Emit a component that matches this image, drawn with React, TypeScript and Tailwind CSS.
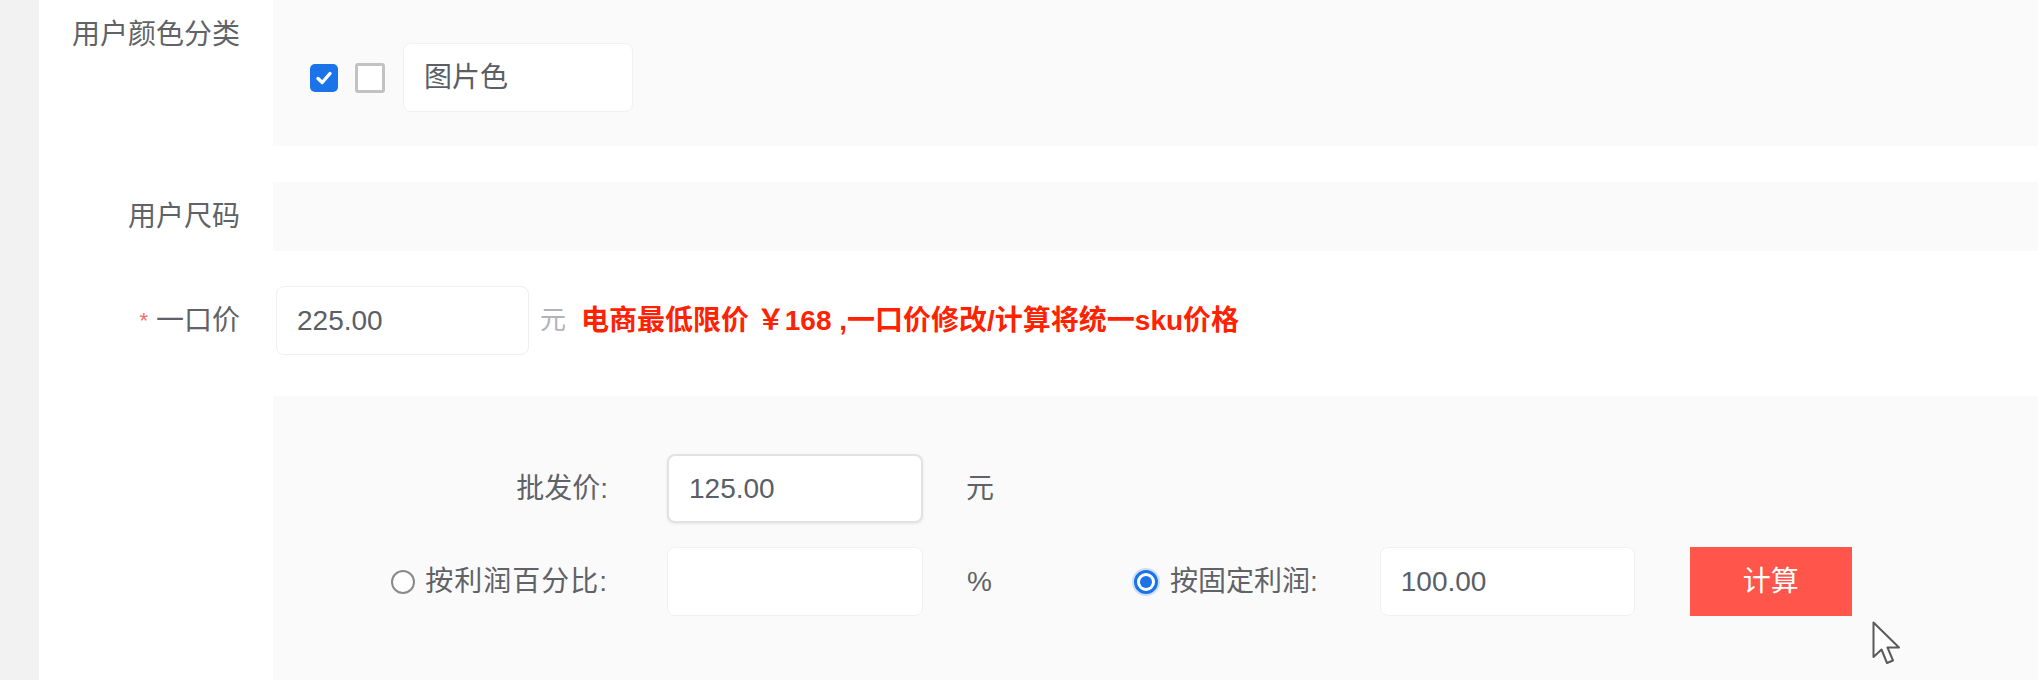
const font = '[font-family:"Liberation_Sans","Noto_Sans_CJK_SC",sans-serif]'

function Label({ children, className = '' }: { children: React.ReactNode; className?: string }) {
  return (
    <div className={`w-[234px] shrink-0 pr-[33px] text-right text-[28px] leading-[40px] text-[#5f6266] ${className}`}>
      {children}
    </div>
  )
}

function Field({ value, className = '' }: { value?: string; className?: string }) {
  return (
    <div
      className={`h-[69px] shrink-0 rounded-[8px] bg-white flex items-center pl-[20px] text-[28px] text-[#5a5e66] ${className}`}
    >
      {value}
    </div>
  )
}

function Radio({ checked }: { checked?: boolean }) {
  return checked ? (
    <span className="w-[24px] h-[24px] rounded-full border-[3px] border-[#1a73e8] bg-white flex items-center justify-center shadow-[0_0_0_2px_rgba(26,115,232,0.2)]">
      <span className="w-[12px] h-[12px] rounded-full bg-[#1a73e8]" />
    </span>
  ) : (
    <span className="w-[24px] h-[24px] rounded-full border-2 border-[#8a8a8a] bg-white" />
  )
}

export default function App() {
  return (
    <div className={`relative flex h-[680px] w-full overflow-hidden bg-white ${font}`}>
      <div className="w-[39px] shrink-0 bg-[#f2f2f2]" />

      <div className="flex-1 flex flex-col">
        {/* 用户颜色分类 */}
        <div className="flex h-[146px]">
          <Label className="pt-[15px]">用户颜色分类</Label>
          <div className="flex-1 bg-[#fafafa] flex items-start pl-[37px] pt-[43px]">
            <div className="flex items-center h-[69px]">
              <span className="w-[28px] h-[28px] rounded-[5px] bg-[#1a73e8] flex items-center justify-center">
                <svg width="20" height="20" viewBox="0 0 20 20">
                  <path d="M4 10.5 L8.2 14.5 L16 5.5" fill="none" stroke="white" strokeWidth="3.4" strokeLinecap="round" strokeLinejoin="round" />
                </svg>
              </span>
              <span className="ml-[17px] w-[30px] h-[30px] rounded-[3px] border-[3px] border-[#c2c2c2] bg-white" />
              <Field value="图片色" className="ml-[18px] w-[230px] pl-[19px] border border-[#f1f1f1]" />
            </div>
          </div>
        </div>

        {/* 用户尺码 */}
        <div className="flex h-[69px] mt-[36px] items-center">
          <Label>用户尺码</Label>
          <div className="flex-1 h-full bg-[#fafafa]" />
        </div>

        {/* 一口价 */}
        <div className="flex h-[69px] mt-[35px] items-center">
          <Label>
            <span className="text-[#f56c6c] text-[22px] align-top mr-[8px]">*</span>一口价
          </Label>
          <Field value="225.00" className="ml-[3px] w-[253px] border border-[#efefef]" />
          <span className="ml-[11px] text-[26px] text-[#b1b3b8]">元</span>
          <span className="ml-[15px] text-[28px] font-bold text-[#ff2200] whitespace-nowrap">
            电商最低限价 ￥168 ,一口价修改/计算将统一sku价格
          </span>
        </div>

        {/* 价格计算 */}
        <div className="flex flex-1 mt-[41px]">
          <div className="w-[234px] shrink-0" />
          <div className="flex-1 bg-[#fafafa] pt-[58px] text-[28px] text-[#5f6266]">
            <div className="flex items-center h-[69px]">
              <div className="w-[335px] shrink-0 text-right">批发价:</div>
              <Field value="125.00" className="ml-[59px] w-[256px] border-2 border-[#e2e2e2] shadow-[0_1px_3px_rgba(0,0,0,0.08)]" />
              <span className="ml-[43px]">元</span>
            </div>

            <div className="flex items-center h-[69px] mt-[24px]">
              <div className="w-[335px] shrink-0 flex items-center justify-end gap-[10px]">
                <Radio />
                <span className="tracking-[1px]">按利润百分比:</span>
              </div>
              <Field className="ml-[59px] w-[256px] border border-[#f1f1f1]" />
              <span className="w-[211px] shrink-0 pl-[44px]">%</span>
              <Radio checked />
              <span className="ml-[12px]">按固定利润:</span>
              <Field value="100.00" className="ml-[62px] w-[255px] border border-[#f1f1f1]" />
              <button className="ml-[55px] w-[162px] h-[69px] bg-[#ff554b] text-white text-[28px]">计算</button>
            </div>
          </div>
        </div>
      </div>

      {/* mouse pointer */}
      <svg className="absolute left-[1872px] top-[621px]" width="32" height="46" viewBox="0 0 32 46">
        <path
          d="M1.5 1.5 L1.5 36 L9.5 28.5 L15 42 L21 39.5 L15.5 26.5 L27 26.5 Z"
          fill="white"
          stroke="#5a5a5a"
          strokeWidth="2"
          strokeLinejoin="round"
        />
      </svg>
    </div>
  )
}
